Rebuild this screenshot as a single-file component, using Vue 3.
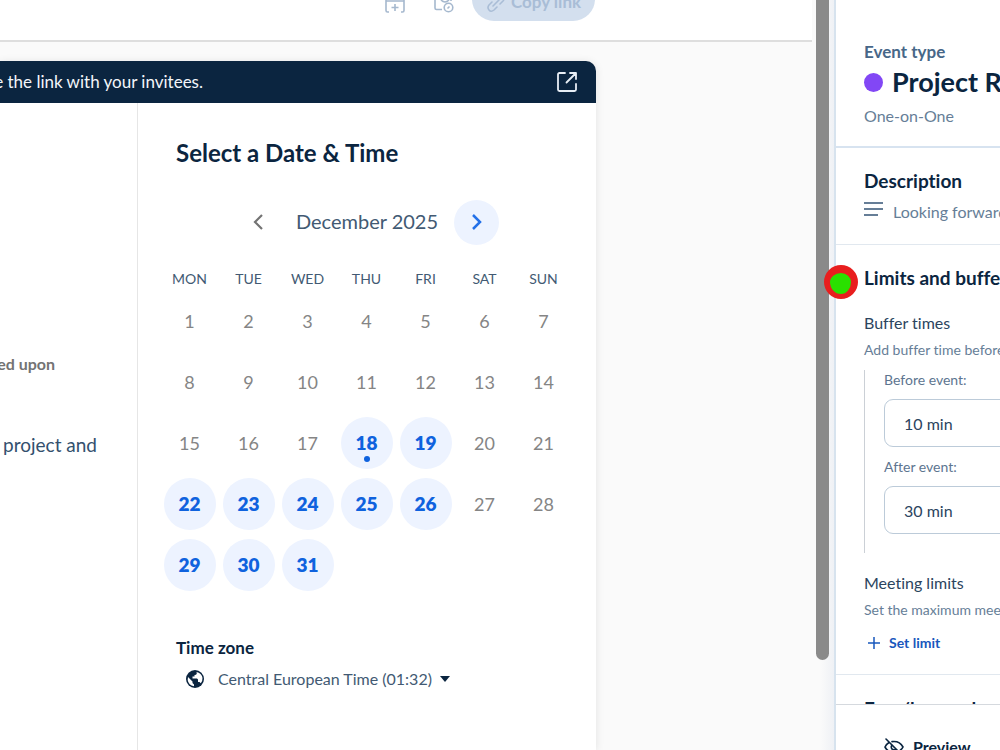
<script setup>
const weekdays = ['MON', 'TUE', 'WED', 'THU', 'FRI', 'SAT', 'SUN']
const weeks = Array.from({ length: 5 }, (_, w) =>
  Array.from({ length: 7 }, (_, d) => w * 7 + d + 1).filter((n) => n <= 31)
)
const open = new Set([18, 19, 22, 23, 24, 25, 26, 29, 30, 31])
const today = 18
</script>

<template>
  <div class="app">
    <main class="main">
      <div class="content">
        <header class="toolbar">
          <button class="icon-btn" aria-label="Add to website">
            <svg width="20" height="20" viewBox="0 0 20 20" fill="none" stroke="currentColor" stroke-width="1.6">
              <path d="M4 19H2.500Q1 19 1 17.500V2.500Q1 1 2.500 1H17.500Q19 1 19 2.500V17.500Q19 19 17.500 19H16M1 8H19M10 11V18M6.500 14.500H13.500" />
            </svg>
          </button>
          <button class="icon-btn" aria-label="Offer times">
            <svg width="20" height="20" viewBox="0 0 20 20" fill="none" stroke="currentColor" stroke-width="1.6">
              <path d="M8 16.500H2.500Q1 16.500 1 15V2M7 7Q11 11 15 7M17 1V8" />
              <circle cx="14.500" cy="14.500" r="4.300" />
              <path d="M13.500 15.500L15.500 13.500" />
            </svg>
          </button>
          <button class="copy" disabled>
            <svg width="20" height="20" viewBox="0 0 20 20" fill="none" stroke="currentColor" stroke-width="1.6" stroke-linecap="round">
              <path d="M7 13L13 7M9 6L12 3Q14.500 1 17 3T17 8L14 11M6 9L3 12Q1 14.500 3 17T8 17L11 14" />
            </svg>
            <span>Copy link</span>
          </button>
        </header>

        <section class="card">
          <div class="banner">
            <p class="banner-text">re the link with your invitees.</p>
            <a class="open-link" href="#" aria-label="Open booking page">
              <svg width="22" height="22" viewBox="0 0 22 22" fill="none" stroke="currentColor" stroke-width="1.8" stroke-linecap="round" stroke-linejoin="round">
                <path d="M9 2H3.500Q2 2 2 3.500V18.500Q2 20 3.500 20H18.500Q20 20 20 18.500V13M14 2H20V8M19.500 2.500L10.500 11.500" />
              </svg>
            </a>
          </div>
          <div class="card-body">
            <div class="details">
              <p class="location">ed upon</p>
              <p class="blurb">project and</p>
            </div>
            <div class="picker">
              <h2>Select a Date &amp; Time</h2>
              <div class="month">
                <button class="nav" aria-label="Previous month">
                  <svg width="12" height="18" viewBox="0 0 12 18" fill="none" stroke="currentColor" stroke-width="2.2"><path d="M10 2L3 9L10 16" /></svg>
                </button>
                <span class="month-name">December 2025</span>
                <button class="nav next" aria-label="Next month">
                  <svg width="12" height="18" viewBox="0 0 12 18" fill="none" stroke="currentColor" stroke-width="2.5"><path d="M2 2L9 9L2 16" /></svg>
                </button>
              </div>
              <table class="calendar">
                <thead>
                  <tr><th v-for="d in weekdays" :key="d" scope="col">{{ d }}</th></tr>
                </thead>
                <tbody>
                  <tr v-for="(week, i) in weeks" :key="i">
                    <td v-for="n in week" :key="n">
                      <button class="day" :class="{ open: open.has(n), today: n === today }" :disabled="!open.has(n)">{{ n }}</button>
                    </td>
                  </tr>
                </tbody>
              </table>
              <h3>Time zone</h3>
              <button class="zone">
                <svg width="20" height="20" viewBox="0 0 20 20">
                  <circle cx="10" cy="10" r="9" fill="#0b2540" />
                  <path fill="#fff" d="M3 8L7.500 12.500V14L9 15.500V17.300Q3.500 16.500 2.700 11ZM11.500 3L11.800 4.500Q11.500 6 9.500 6V7.500H7.500V9.500H12L13 10.500V13H14.500L15.800 14.300Q19.500 9 15.500 5Q14 3.500 11.500 3Z" />
                </svg>
                <span>Central European Time (01:32)</span>
                <svg class="caret" width="10" height="6" viewBox="0 0 10 6"><path d="M0 0H10L5 6Z" fill="#0b2540" /></svg>
              </button>
            </div>
          </div>
        </section>
      </div>
      <div class="track"><div class="thumb"></div></div>
    </main>

    <aside class="panel">
      <div class="scroll">
        <section class="event">
          <p class="kind">Event type</p>
          <h1><i class="swatch"></i>Project Review</h1>
          <p class="mode">One-on-One</p>
        </section>
        <section class="description">
          <h2>Description</h2>
          <p class="summary">
            <svg width="20" height="16" viewBox="0 0 20 16" stroke="currentColor" stroke-width="1.8"><path d="M0 2H19M0 8H19M0 14H14" /></svg>
            Looking forward to it
          </p>
        </section>
        <section class="limits">
          <h2>Limits and buffers</h2>
          <h3>Buffer times</h3>
          <p class="hint">Add buffer time before or after</p>
          <div class="buffers">
            <label for="before">Before event:</label>
            <select id="before"><option>10 min</option></select>
            <label for="after">After event:</label>
            <select id="after"><option>30 min</option></select>
          </div>
          <h3>Meeting limits</h3>
          <p class="hint">Set the maximum meetings</p>
          <button class="add">
            <svg width="12" height="12" viewBox="0 0 12 12" stroke="currentColor" stroke-width="1.5"><path d="M6 0V12M0 6H12" /></svg>
            Set limit
          </button>
        </section>
        <section class="rules"><h2>Free/busy rules</h2></section>
      </div>
      <footer>
        <button class="preview">
          <svg width="20" height="20" viewBox="0 0 20 20" fill="none" stroke="currentColor" stroke-width="1.6" stroke-linecap="round">
            <path d="M2 2L18 18M5 5.500Q2.500 7 1 10Q4 15.500 10 15.500Q12 15.500 14 14.500M8 4.600Q15.500 3.500 19 10Q18 12 16.500 13M8 8Q6.500 10 8 12Q10 13.500 12 12" />
          </svg>
          Preview
        </button>
      </footer>
    </aside>
    <div class="pointer"></div>
  </div>
</template>

<style>
body { margin: 0; }
</style>

<style scoped>
.app {
  position: relative;
  display: flex;
  height: 100vh;
  overflow: hidden;
  background: #fafafa;
  color: #0b2540;
  font-family: Lato, "Open Sans", sans-serif;
  font-variant-ligatures: none;
  white-space: nowrap;
}
h1, h2, h3, p { margin: 0; }
button {
  margin: 0;
  padding: 0;
  border: 0;
  background: none;
  color: inherit;
  font: inherit;
  font-variant-ligatures: none;
}
svg { display: block; flex: none; }
.main { display: flex; flex: 1; min-width: 0; }
.content { display: flex; flex: 1; flex-direction: column; min-width: 0; }

.toolbar {
  display: flex;
  flex: none;
  align-items: flex-end;
  justify-content: flex-end;
  box-sizing: border-box;
  height: 42px;
  padding: 0 217px 19px 0;
  border-bottom: 2px solid #dedede;
  background: #fff;
}
.icon-btn { margin: 0 29px 8px 0; color: #a5b8ce; }
.icon-btn + .icon-btn { margin-right: 18px; }
.copy {
  display: flex;
  align-items: center;
  justify-content: center;
  gap: 5px;
  width: 123px;
  height: 44px;
  border-radius: 22px;
  background: #d3dfee;
  color: #a9bdd6;
  font-size: 17px;
  font-weight: 700;
}
.copy svg { margin-top: 8px; }
.copy span { margin-top: 4px; }

.card {
  display: flex;
  flex: 1;
  flex-direction: column;
  margin: 19px 216px 0 0;
  overflow: hidden;
  border-top-right-radius: 10px;
  background: #fff;
  box-shadow: 0 1px 8px rgba(0, 0, 0, 0.1);
}
.banner {
  display: flex;
  align-items: center;
  justify-content: space-between;
  height: 42px;
  padding-right: 18px;
  background: #0b2540;
  color: #f3f6fa;
  font-size: 17px;
}
.banner-text { display: flex; justify-content: flex-end; width: 203px; line-height: 20px; }
.open-link { color: #e8eef5; }
.card-body { display: flex; flex: 1; }
.details {
  box-sizing: border-box;
  flex: none;
  width: 138px;
  padding-top: 251px;
  border-right: 1px solid #e6e6e6;
}
.location {
  display: flex;
  justify-content: flex-end;
  width: 55px;
  color: #737373;
  font-size: 16px;
  font-weight: 700;
  line-height: 20px;
}
.blurb {
  display: flex;
  justify-content: flex-end;
  width: 97px;
  margin-top: 59px;
  color: #33506e;
  font-size: 19px;
  line-height: 24px;
}
.picker { flex: 1; padding: 34px 22px 0; }
.picker h2 { margin-left: 16px; font-size: 24px; line-height: 32px; }
.month { display: flex; align-items: center; height: 46px; margin: 30px 0 0 75px; }
.nav { display: flex; align-items: center; justify-content: center; width: 45px; height: 45px; border-radius: 50%; color: #737373; }
.next { background: #edf3ff; color: #2471e8; }
.month-name { width: 174px; padding-bottom: 2px; color: #425a73; font-size: 20px; line-height: 24px; text-align: center; }
.calendar { width: 413px; margin-top: 21px; border-spacing: 0; table-layout: fixed; }
.calendar th { box-sizing: border-box; height: 24px; padding: 0; color: #425a73; font-size: 14px; font-weight: 400; }
.calendar td { height: 61px; padding: 0; text-align: center; }
.day { position: relative; width: 52px; height: 52px; border-radius: 50%; color: #858585; font-size: 18px; vertical-align: middle; }
.open { background: #edf3ff; color: #0f62de; font-size: 19px; font-weight: 800; }
.today::after {
  content: "";
  position: absolute;
  bottom: 7px;
  left: 23px;
  width: 6px;
  height: 6px;
  border-radius: 50%;
  background: #0f62de;
}
.picker h3 { margin: 41px 0 0 16px; font-size: 17px; line-height: 24px; }
.zone { display: flex; align-items: center; margin: 7px 0 0 25px; color: #425a73; font-size: 16px; line-height: 24px; }
.zone span { margin-left: 13px; }
.caret { margin-left: 8px; }
.track { box-sizing: border-box; width: 22px; padding-left: 4px; background: linear-gradient(90deg, #fafafa 40%, #eff1f5); }
.thumb { width: 13px; height: 660px; border-radius: 0 0 7px 7px; background: #8a8a8a; }

.panel {
  display: flex;
  flex: 0 0 166px;
  flex-direction: column;
  box-sizing: border-box;
  overflow: hidden;
  border-left: 2px solid #d7e3ee;
  background: #fff;
}
.scroll { flex: 1; min-height: 0; overflow: hidden; }
.scroll section { padding-left: 28px; border-bottom: 1px solid #e1e8ef; }
.panel h2 { font-size: 19px; line-height: 24px; }
.panel h3 { font-size: 16px; font-weight: 400; line-height: 20px; color: #2b445e; }
.scroll .event { box-sizing: border-box; height: 148px; padding-top: 42px; border-bottom: 2px solid #d7e3f0; }
.kind { color: #476788; font-size: 17px; font-weight: 700; line-height: 20px; }
h1 { display: flex; align-items: center; gap: 9px; margin-top: 4px; font-size: 27px; line-height: 32px; }
.swatch { width: 19px; height: 19px; flex: none; border-radius: 50%; background: #8247f5; }
.mode { margin-top: 8px; color: #667e97; font-size: 16px; line-height: 20px; }
.description { padding-top: 21px; padding-bottom: 21px; }
.summary { display: flex; gap: 9px; margin-top: 8px; color: #667e97; font-size: 16px; line-height: 22px; }
.limits { padding-top: 21px; padding-bottom: 21px; }
.limits h3 { margin-top: 23px; }
.hint { margin-top: 7px; color: #667e97; font-size: 14px; line-height: 20px; }
.buffers { display: flex; flex-direction: column; margin-top: 10px; padding: 0 0 19px 19px; border-left: 1px solid #cbd0d6; }
.buffers label { color: #5d7590; font-size: 14px; line-height: 20px; }
select {
  box-sizing: border-box;
  width: 280px;
  height: 48px;
  margin: 9px 0 10px;
  padding: 0 19px;
  border: 1px solid #bccbd9;
  border-radius: 9px;
  background: #fff;
  color: #2b445e;
  font: 16px Lato, sans-serif;
  appearance: none;
}
select:last-child { margin-bottom: 0; }
.limits .buffers + h3 { margin-top: 20px; }
.add { display: flex; align-items: center; gap: 9px; margin: 13px 0 0 4px; color: #1958bd; font-size: 14px; font-weight: 700; line-height: 20px; }
.rules { padding-top: 22px; }
footer { box-sizing: border-box; flex: none; height: 46px; padding: 30px 0 0 48px; border-top: 1px solid #d5d9de; }
.preview { display: flex; align-items: center; gap: 9px; font-size: 16px; font-weight: 700; line-height: 24px; }
.pointer {
  position: absolute;
  top: 265px;
  left: 824px;
  box-sizing: border-box;
  width: 34px;
  height: 34px;
  border: solid #e81e1e;
  border-width: 8px 7px 5px 6px;
  border-radius: 50%;
  background: #2ae000;
}
</style>
